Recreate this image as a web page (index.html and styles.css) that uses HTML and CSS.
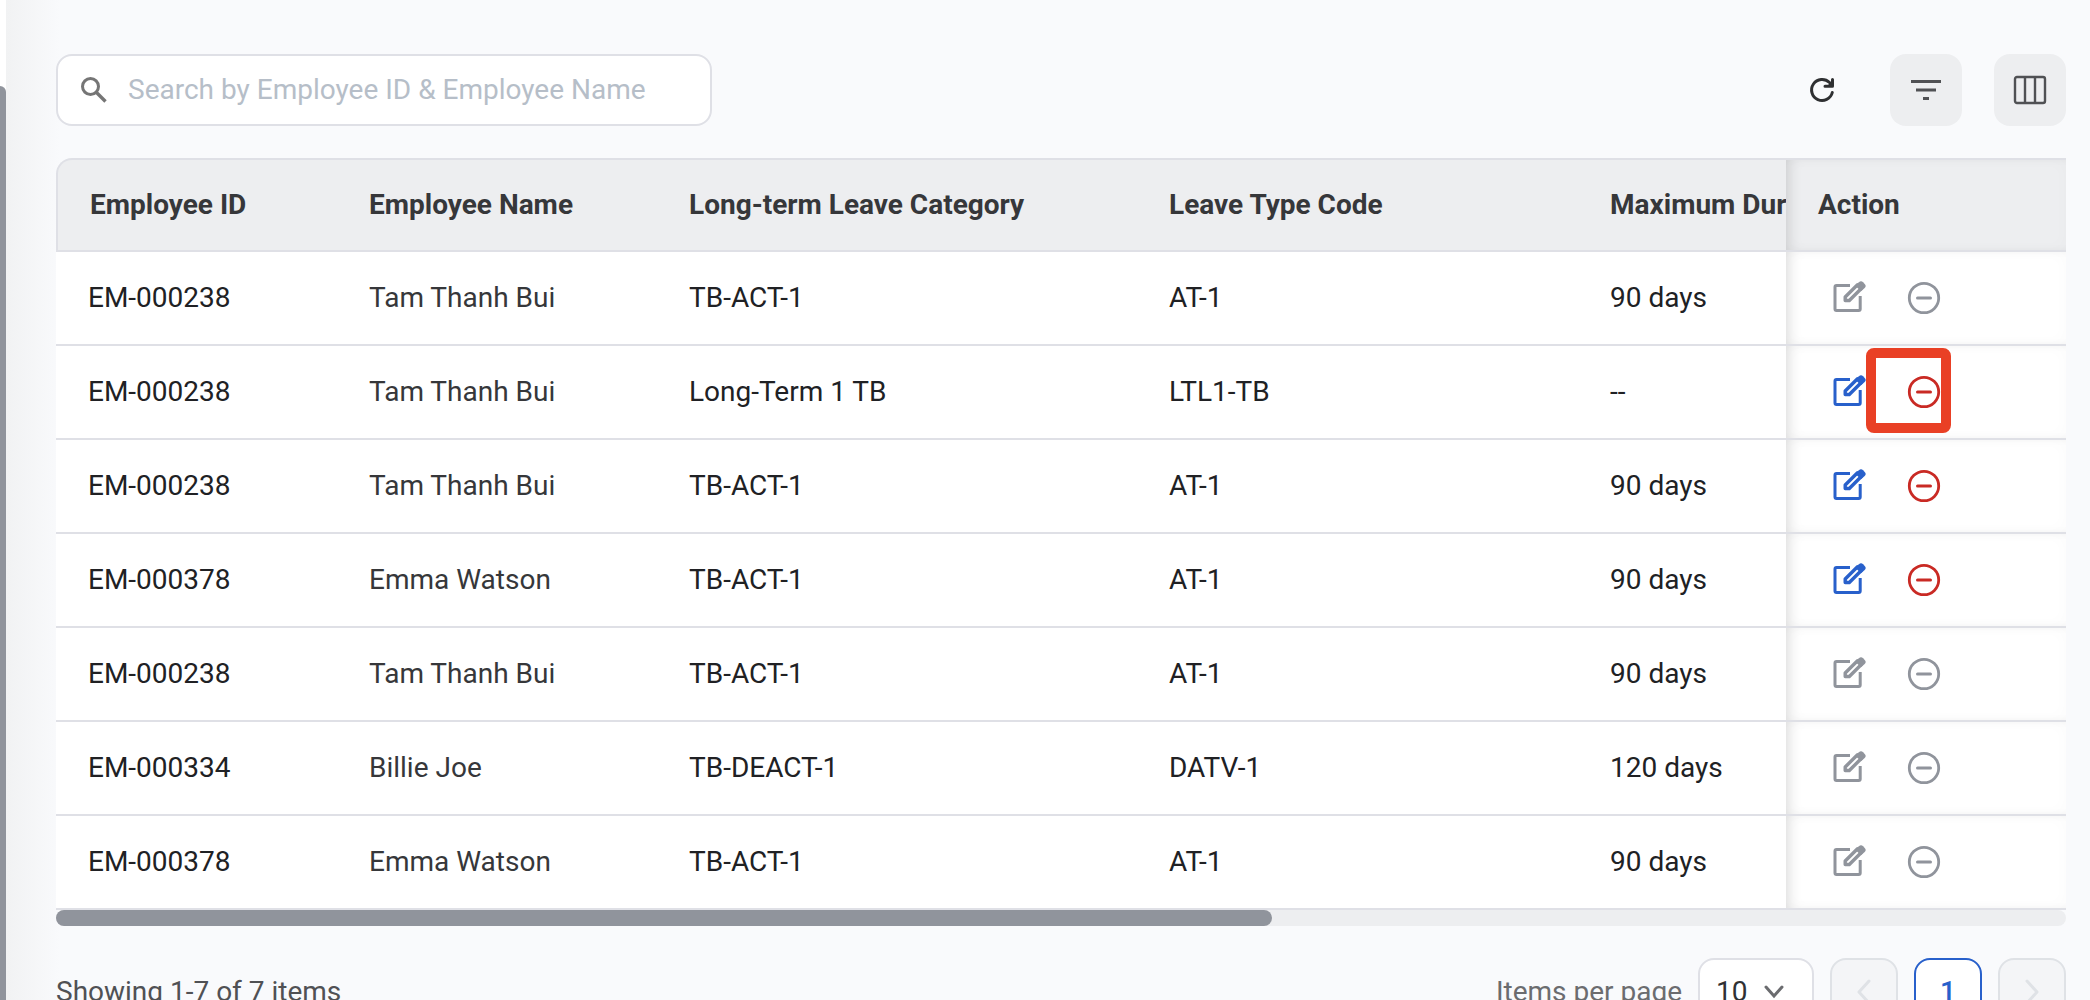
FILE: index.html
```
<!DOCTYPE html>
<html lang="en">
<head>
    <meta charset="UTF-8">
    <meta name="viewport" content="width=device-width, initial-scale=1.0">
    <title>Long-term Leave</title>
    <link rel="stylesheet" href="styles.css">
</head>
<body>

    <!-- Shared icons -->
    <svg class="sprite" aria-hidden="true">
        <symbol id="icon-edit" viewBox="0 0 36 36">
            <path d="M20 5.5H6.500Q5 5.500 5 7V29Q5 30.500 6.500 30.500H28.700Q30.200 30.500 30.200 29V16" fill="none" stroke="currentColor" stroke-width="3"/>
            <path d="M15.200 20.500V17L27.500 4.700L31.300 8.500L19.300 20.500Z" fill="none" stroke="currentColor" stroke-width="3.400" stroke-linejoin="round"/>
            <path d="M25.600 6L28.900 2.300Q31 .3 33.100 2.300L34.700 3.900Q36.700 6 34.700 8L31 11.300Z" fill="currentColor"/>
        </symbol>
        <symbol id="icon-stop" viewBox="0 0 36 36">
            <circle cx="18" cy="18" r="14.700" fill="none" stroke="currentColor" stroke-width="2.800"/>
            <path d="M11.500 18H24.500" stroke="currentColor" stroke-width="3" stroke-linecap="round"/>
        </symbol>
    </svg>

    <aside class="side">
        <div class="side-thumb"></div>
    </aside>

    <main class="content">

        <!-- Toolbar -->
        <div class="toolbar">
            <label class="search">
                <svg width="28" height="28" viewBox="0 0 28 28" fill="none" stroke="#757575">
                    <circle cx="10.500" cy="10.500" r="8" stroke-width="3"/>
                    <path d="M16.500 16.500L25.500 25.500" stroke-width="3.400"/>
                </svg>
                <input type="text" placeholder="Search by Employee ID &amp; Employee Name" aria-label="Search">
            </label>
            <div class="tools">
                <button class="tool tool-plain" aria-label="Refresh">
                    <svg width="28" height="28" viewBox="0 0 28 28" fill="none" stroke="#2f3032" stroke-width="3" stroke-linecap="round">
                        <path d="M24.300 16.500A10.500 10.500 0 1 1 21.500 6.500L24 9"/>
                        <path d="M24.500 3.500V10.200H17" stroke-linejoin="round"/>
                        <path d="M24.500 4L19 10.200H24.500Z" fill="#2f3032" stroke="none"/>
                    </svg>
                </button>
                <button class="tool" aria-label="Filter">
                    <svg width="32" height="24" viewBox="0 0 32 24" fill="#505154">
                        <path d="M1 2H31V5H1ZM6 10.500H26V13.500H6ZM13 19H19V22H13Z"/>
                    </svg>
                </button>
                <button class="tool" aria-label="Columns">
                    <svg width="34" height="30" viewBox="0 0 34 30" fill="none" stroke="#505154" stroke-width="2.400">
                        <rect x="2" y="2" width="30" height="26" rx="2"/>
                        <path d="M12 2V28M22 2V28"/>
                    </svg>
                </button>
            </div>
        </div>

        <!-- Leave table -->
        <table class="leave-table">
            <colgroup>
                <col class="col-id">
                <col class="col-name">
                <col class="col-category">
                <col class="col-code">
                <col>
                <col class="col-action">
            </colgroup>
            <thead>
                <tr>
                    <th>Employee ID</th>
                    <th>Employee Name</th>
                    <th>Long-term Leave Category</th>
                    <th>Leave Type Code</th>
                    <th>Maximum Dur</th>
                    <th class="action">Action</th>
                </tr>
            </thead>
            <tbody>
                <tr>
                    <td>EM-000238</td>
                    <td class="name">Tam Thanh Bui</td>
                    <td>TB-ACT-1</td>
                    <td>AT-1</td>
                    <td>90 days</td>
                    <td class="action"><div class="actions">
                        <button class="edit" aria-label="Edit" disabled><svg><use href="#icon-edit"/></svg></button>
                        <button class="stop" aria-label="Deactivate" disabled><svg><use href="#icon-stop"/></svg></button>
                    </div></td>
                </tr>
                <tr>
                    <td>EM-000238</td>
                    <td class="name">Tam Thanh Bui</td>
                    <td>Long-Term 1 TB</td>
                    <td>LTL1-TB</td>
                    <td>--</td>
                    <td class="action"><div class="actions">
                        <button class="edit" aria-label="Edit"><svg><use href="#icon-edit"/></svg></button>
                        <button class="stop marked" aria-label="Deactivate"><svg><use href="#icon-stop"/></svg></button>
                    </div></td>
                </tr>
                <tr>
                    <td>EM-000238</td>
                    <td class="name">Tam Thanh Bui</td>
                    <td>TB-ACT-1</td>
                    <td>AT-1</td>
                    <td>90 days</td>
                    <td class="action"><div class="actions">
                        <button class="edit" aria-label="Edit"><svg><use href="#icon-edit"/></svg></button>
                        <button class="stop" aria-label="Deactivate"><svg><use href="#icon-stop"/></svg></button>
                    </div></td>
                </tr>
                <tr>
                    <td>EM-000378</td>
                    <td class="name">Emma Watson</td>
                    <td>TB-ACT-1</td>
                    <td>AT-1</td>
                    <td>90 days</td>
                    <td class="action"><div class="actions">
                        <button class="edit" aria-label="Edit"><svg><use href="#icon-edit"/></svg></button>
                        <button class="stop" aria-label="Deactivate"><svg><use href="#icon-stop"/></svg></button>
                    </div></td>
                </tr>
                <tr>
                    <td>EM-000238</td>
                    <td class="name">Tam Thanh Bui</td>
                    <td>TB-ACT-1</td>
                    <td>AT-1</td>
                    <td>90 days</td>
                    <td class="action"><div class="actions">
                        <button class="edit" aria-label="Edit" disabled><svg><use href="#icon-edit"/></svg></button>
                        <button class="stop" aria-label="Deactivate" disabled><svg><use href="#icon-stop"/></svg></button>
                    </div></td>
                </tr>
                <tr>
                    <td>EM-000334</td>
                    <td class="name">Billie Joe</td>
                    <td>TB-DEACT-1</td>
                    <td>DATV-1</td>
                    <td>120 days</td>
                    <td class="action"><div class="actions">
                        <button class="edit" aria-label="Edit" disabled><svg><use href="#icon-edit"/></svg></button>
                        <button class="stop" aria-label="Deactivate" disabled><svg><use href="#icon-stop"/></svg></button>
                    </div></td>
                </tr>
                <tr>
                    <td>EM-000378</td>
                    <td class="name">Emma Watson</td>
                    <td>TB-ACT-1</td>
                    <td>AT-1</td>
                    <td>90 days</td>
                    <td class="action"><div class="actions">
                        <button class="edit" aria-label="Edit" disabled><svg><use href="#icon-edit"/></svg></button>
                        <button class="stop" aria-label="Deactivate" disabled><svg><use href="#icon-stop"/></svg></button>
                    </div></td>
                </tr>
            </tbody>
        </table>
        <div class="scrollbar"><div class="scrollbar-thumb"></div></div>

        <!-- Pagination -->
        <div class="footer">
            <p>Showing 1-7 of 7 items</p>
            <div class="pager">
                <label for="pageSize">Items per page</label>
                <div class="page-size">
                    <select id="pageSize">
                        <option>10</option>
                        <option>20</option>
                        <option>50</option>
                    </select>
                    <svg width="20" height="14" viewBox="0 0 20 14"><path d="M2 2L10 11L18 2" fill="none" stroke="#6b6c6f" stroke-width="3" stroke-linecap="round"/></svg>
                </div>
                <button class="page" aria-label="Previous page" disabled>
                    <svg width="16" height="26" viewBox="0 0 16 26"><path d="M13 2L3 13L13 24" fill="none" stroke="currentColor" stroke-width="3" stroke-linecap="round" stroke-linejoin="round"/></svg>
                </button>
                <button class="page current">1</button>
                <button class="page" aria-label="Next page" disabled>
                    <svg width="16" height="26" viewBox="0 0 16 26"><path d="M3 2L13 13L3 24" fill="none" stroke="currentColor" stroke-width="3" stroke-linecap="round" stroke-linejoin="round"/></svg>
                </button>
            </div>
        </div>
    </main>

</body>
</html>
```
FILE: styles.css
```
*, *::after {
    box-sizing: border-box;
}
html {
    height: 100%;
    overflow: hidden;
}
body {
    display: flex;
    height: 100%;
    margin: 0;
    overflow: hidden;
    background-color: #f9fafc;
    color: #202124;
    font-family: Roboto, sans-serif;
    font-size: 28px;
    line-height: 40px;
}
button, input, select {
    font: inherit;
}
button {
    display: flex;
    align-items: center;
    justify-content: center;
    padding: 0;
    border: none;
    background: none;
    cursor: pointer;
}
.sprite {
    display: none;
}
/* Edge of the side menu with its scrollbar */
.side {
    flex: none;
    width: 6px;
    padding-top: 86px;
    background-color: white;
}
.side-thumb {
    height: 100%;
    border-top-right-radius: 6px;
    background-color: #90949c;
}
.content {
    flex: 1;
    min-width: 0;
    padding: 54px 24px 0 50px;
    background: linear-gradient(to right, #f1f2f3, #f9fafc 54px);
}
/* Toolbar */
.toolbar {
    display: flex;
    align-items: center;
    justify-content: space-between;
    margin-bottom: 32px;
}
.search {
    display: flex;
    align-items: center;
    gap: 20px;
    width: 656px;
    height: 72px;
    padding: 0 22px;
    border: 2px solid #dfe0e6;
    border-radius: 16px;
    background-color: white;
}
.search input {
    flex: 1;
    min-width: 0;
    padding: 0;
    border: none;
    outline: none;
    background: none;
}
.search input::placeholder {
    color: #b6bec8;
}
.tools {
    display: flex;
    gap: 32px;
}
.tool {
    width: 72px;
    height: 72px;
    border-radius: 16px;
    background-color: #edeef0;
}
.tool-plain {
    background: none;
}
/* Leave table */
.leave-table {
    width: 100%;
    table-layout: fixed;
    border-collapse: separate;
    border-spacing: 0;
}
.col-id {
    width: 281px;
}
.col-name {
    width: 320px;
}
.col-category {
    width: 480px;
}
.col-code {
    width: 441px;
}
.col-action {
    width: 280px;
}
.leave-table th,
.leave-table td {
    height: 94px;
    padding: 0 0 0 32px;
    overflow: hidden;
    border-bottom: 2px solid #dfe0e6;
    text-align: left;
    white-space: nowrap;
}
.leave-table th {
    border-top: 2px solid #dfe0e6;
    background-color: #edeef0;
    color: #36373a;
    font-weight: bold;
}
.leave-table th:first-child {
    border-left: 2px solid #dfe0e6;
    border-top-left-radius: 16px;
}
.leave-table td {
    background-color: white;
}
.leave-table .name {
    color: #36373a;
}
.leave-table .action {
    overflow: visible;
    box-shadow: inset 10px 0 16px -10px rgba(0, 0, 0, 0.18), inset 0 0 16px rgba(0, 0, 0, 0.02);
}
.actions {
    display: flex;
    gap: 16px;
}
.actions button {
    position: relative;
    width: 60px;
    height: 60px;
}
.actions svg {
    width: 36px;
    height: 36px;
}
.edit {
    color: #2860cb;
}
.stop {
    color: #c92a24;
}
.actions button:disabled {
    color: #90949c;
    cursor: default;
}
/* Frame round the highlighted action */
.marked::after {
    content: "";
    position: absolute;
    top: -14px;
    left: -28px;
    width: 85px;
    height: 85px;
    border: 10px solid #e94025;
    border-radius: 8px;
}
.scrollbar {
    height: 16px;
    border-radius: 8px;
    background-color: #edeef0;
}
.scrollbar-thumb {
    width: 60.5%;
    height: 100%;
    border-radius: 8px;
    background-color: #90949c;
}
/* Pagination */
.footer {
    display: flex;
    align-items: center;
    justify-content: space-between;
    margin-top: 32px;
    color: #505154;
}
.footer p {
    margin: 0;
}
.pager {
    display: flex;
    align-items: center;
    gap: 16px;
}
.pager label {
    color: #6b6c6f;
}
.page-size {
    position: relative;
}
.page-size select {
    width: 116px;
    height: 68px;
    padding: 0 16px;
    border: 2px solid #dfe0e6;
    border-radius: 16px;
    appearance: none;
    background-color: white;
    color: #303134;
}
.page-size svg {
    position: absolute;
    top: 27px;
    right: 30px;
    pointer-events: none;
}
.page {
    width: 68px;
    height: 68px;
    border: 2px solid #dfe2e6;
    border-radius: 16px;
    background-color: #f4f5f7;
    color: #dfe2e6;
}
.current {
    border-color: #2860cb;
    background-color: white;
    color: #2860cb;
    font-weight: 500;
}
```
